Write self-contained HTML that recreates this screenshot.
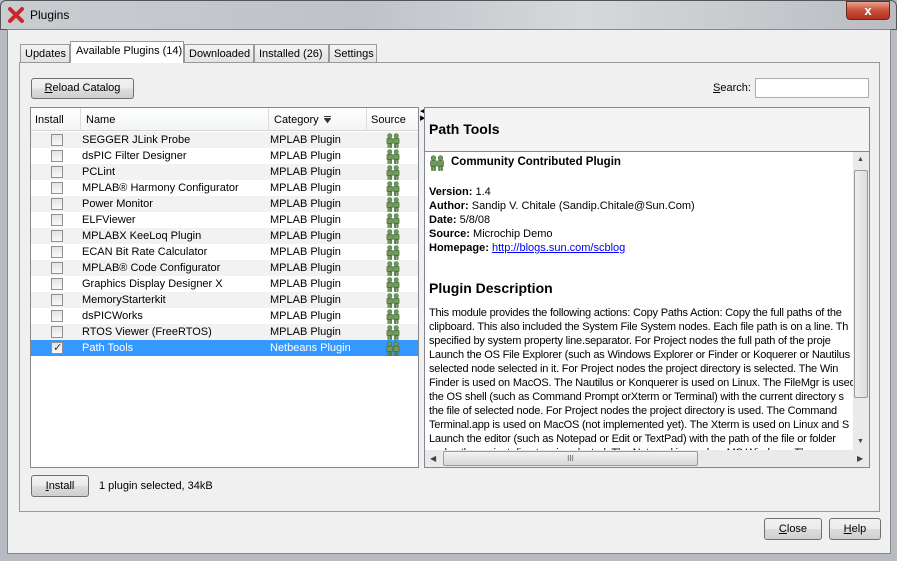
<!DOCTYPE html>
<html><head><meta charset="utf-8"><style>
*{box-sizing:border-box;margin:0;padding:0}
body{width:897px;height:561px;overflow:hidden;font-family:"Liberation Sans","DejaVu Sans",sans-serif;font-size:11px;color:#000;background:#b8bcc2;position:relative}
.a{position:absolute}
.btn{position:absolute;border:1px solid #707070;border-radius:3px;background:linear-gradient(#f2f2f2,#ebebeb 50%,#dddddd 51%,#cfcfcf);text-align:center;font-size:11px}
.row{position:absolute;left:0;width:387px;height:16px;line-height:16px}
.row span{position:absolute}
.cb{position:absolute;left:20px;top:2px;width:12px;height:12px;border:1px solid #8f8f8f;background:linear-gradient(#e4e4e4,#f8f8f8)}
.ic{position:absolute;left:354px;top:1px}
.txt p{white-space:nowrap}
u{text-decoration:underline}
</style></head><body>
<div class="a" style="left:0;top:0;width:897px;height:30px;background:linear-gradient(90deg,#c9ccd1,#bfc3c8 40%,#d6d8db 65%,#b9bdc2);border:1px solid #555;border-radius:6px 6px 0 0"></div>
<svg class="a" style="left:7px;top:6px" width="18" height="18" viewBox="0 0 18 18"><path d="M3 3L15 15M15 3L3 15" stroke="#c8282c" stroke-width="4" stroke-linecap="round"/></svg>
<div class="a" style="left:30px;top:8px;font-size:12px">Plugins</div>
<div class="a" style="left:846px;top:1px;width:44px;height:19px;border:1px solid #6b2a20;border-radius:0 0 4px 4px;background:linear-gradient(#e8a090,#c9503a 50%,#b2301c);color:#fff;font-weight:bold;text-align:center;line-height:17px;font-size:13px">x</div>
<div class="a" style="left:7px;top:29px;width:884px;height:525px;background:#f0f0f0;border:1px solid #888"></div>
<div class="a" style="left:20px;top:44px;width:50px;height:19px;border:1px solid #999;border-bottom:none;background:linear-gradient(#f4f4f4,#e2e2e2);line-height:18px;padding-left:4px">Updates</div>
<div class="a" style="left:70px;top:41px;width:114px;height:22px;border:1px solid #999;border-bottom:none;background:#fff;line-height:19px;padding-left:5px;z-index:2">Available Plugins (14)</div>
<div class="a" style="left:184px;top:44px;width:70px;height:19px;border:1px solid #999;border-bottom:none;background:linear-gradient(#f4f4f4,#e2e2e2);line-height:18px;padding-left:4px">Downloaded</div>
<div class="a" style="left:254px;top:44px;width:75px;height:19px;border:1px solid #999;border-bottom:none;background:linear-gradient(#f4f4f4,#e2e2e2);line-height:18px;padding-left:4px">Installed (26)</div>
<div class="a" style="left:329px;top:44px;width:48px;height:19px;border:1px solid #999;border-bottom:none;background:linear-gradient(#f4f4f4,#e2e2e2);line-height:18px;padding-left:4px">Settings</div>
<div class="a" style="left:19px;top:62px;width:861px;height:450px;border:1px solid #999;background:#f0f0f0"></div>
<div class="btn" style="left:31px;top:78px;width:103px;height:21px;line-height:19px"><u>R</u>eload Catalog</div>
<div class="a" style="left:713px;top:82px"><u>S</u>earch:</div>
<div class="a" style="left:755px;top:78px;width:114px;height:20px;border:1px solid #abadb3;background:#fff"></div>
<div class="a" style="left:30px;top:107px;width:389px;height:361px;border:1px solid #828790;background:#fff;overflow:hidden">
<div class="a" style="left:0;top:0;width:387px;height:23px;background:linear-gradient(#fff,#f3f4f6);border-bottom:1px solid #d5d5d5"></div>
<div class="a" style="left:49px;top:0;width:1px;height:23px;background:#dcdcdc"></div>
<div class="a" style="left:237px;top:0;width:1px;height:23px;background:#dcdcdc"></div>
<div class="a" style="left:335px;top:0;width:1px;height:23px;background:#dcdcdc"></div>
<div class="a" style="left:4px;top:6px">Install</div>
<div class="a" style="left:55px;top:6px">Name</div>
<div class="a" style="left:243px;top:6px">Category</div>
<svg class="a" style="left:293px;top:8px" width="7" height="7" viewBox="0 0 7 7"><path d="M0 0.5H7M0.5 2.5H6.5L3.5 6.5Z" stroke="#333" stroke-width="1" fill="#333"/></svg>
<div class="a" style="left:340px;top:6px">Source</div>
<div id="rows"></div>
</div>
<div class="a" style="left:420px;top:108px;font-size:7px;line-height:7px">◀<br>▶</div>
<div class="a" style="left:424px;top:107px;width:446px;height:361px;border:1px solid #828790;background:#f4f4f4;overflow:hidden">
<div class="a" style="left:4px;top:13px;font-size:14px;font-weight:bold">Path Tools</div>
<div class="a" style="left:0;top:43px;width:444px;height:1px;background:#828790"></div>
<div class="a" style="left:0;top:44px;width:428px;height:298px;background:#fff;overflow:hidden">
<svg class="a" style="left:4px;top:3px" width="16" height="16" viewBox="0 0 16 16"><g fill="#6f9a5a" stroke="#3f6a30" stroke-width=".6"><circle cx="4.5" cy="3" r="2.3"/><circle cx="11.5" cy="3" r="2.3"/><rect x="1.5" y="5.5" width="6" height="6" rx="1"/><rect x="8.5" y="5.5" width="6" height="6" rx="1"/><rect x="2.5" y="11" width="1.5" height="4.5"/><rect x="5" y="11" width="1.5" height="4.5"/><rect x="9.5" y="11" width="1.5" height="4.5"/><rect x="12" y="11" width="1.5" height="4.5"/></g></svg>
<div class="a" style="left:26px;top:4px;font-weight:bold;font-size:11.5px">Community Contributed Plugin</div>
<div class="a txt" style="left:4px;top:33px;line-height:14px">
<p><b>Version:</b> 1.4</p><p><b>Author:</b> Sandip V. Chitale (Sandip.Chitale@Sun.Com)</p><p><b>Date:</b> 5/8/08</p><p><b>Source:</b> Microchip Demo</p><p><b>Homepage:</b> <span style="color:#00f;text-decoration:underline">http://blogs.sun.com/scblog</span></p></div>
<div class="a" style="left:4px;top:128px;font-size:14px;font-weight:bold">Plugin Description</div>
<div class="a txt" style="left:4px;top:154px;line-height:14px;letter-spacing:-0.2px">
<p>This module provides the following actions: Copy Paths Action: Copy the full paths of the</p>
<p>clipboard. This also included the System File System nodes. Each file path is on a line. Th</p>
<p>specified by system property line.separator. For Project nodes the full path of the proje</p>
<p>Launch the OS File Explorer (such as Windows Explorer or Finder or Koquerer or Nautilus</p>
<p>selected node selected in it. For Project nodes the project directory is selected. The Win</p>
<p>Finder is used on MacOS. The Nautilus or Konquerer is used on Linux. The FileMgr is used</p>
<p>the OS shell (such as Command Prompt orXterm or Terminal) with the current directory s</p>
<p>the file of selected node. For Project nodes the project directory is used. The Command</p>
<p>Terminal.app is used on MacOS (not implemented yet). The Xterm is used on Linux and S</p>
<p>Launch the editor (such as Notepad or Edit or TextPad) with the path of the file or folder</p>
<p>nodes the project directory is selected. The Notepad is used on MS Windows. The comm</p></div>
</div>
<div class="a" style="left:428px;top:44px;width:16px;height:298px;background:#eaeaea"></div>
<div class="a" style="left:432px;top:48px;font-size:7px;color:#444">▲</div>
<div class="a" style="left:429px;top:62px;width:14px;height:228px;border:1px solid #9a9a9a;border-radius:2px;background:linear-gradient(90deg,#eee,#dcdcdc)"></div>
<div class="a" style="left:432px;top:330px;font-size:7px;color:#444">▼</div>
<div class="a" style="left:0;top:342px;width:444px;height:17px;background:#eaeaea"></div>
<div class="a" style="left:5px;top:346px;font-size:8px;color:#444">◀</div>
<div class="a" style="left:18px;top:343px;width:255px;height:15px;border:1px solid #9a9a9a;border-radius:2px;background:linear-gradient(#f2f2f2,#d8d8d8);text-align:center;font-size:8px;line-height:13px;color:#555">III</div>
<div class="a" style="left:432px;top:346px;font-size:8px;color:#444">▶</div>
</div>
<div class="btn" style="left:31px;top:475px;width:58px;height:22px;line-height:20px"><u>I</u>nstall</div>
<div class="a" style="left:99px;top:480px">1 plugin selected, 34kB</div>
<div class="btn" style="left:764px;top:518px;width:58px;height:22px;line-height:20px"><u>C</u>lose</div>
<div class="btn" style="left:829px;top:518px;width:52px;height:22px;line-height:20px"><u>H</u>elp</div>
<script>
var names=["SEGGER JLink Probe","dsPIC Filter Designer","PCLint","MPLAB® Harmony Configurator","Power Monitor","ELFViewer","MPLABX KeeLoq Plugin","ECAN Bit Rate Calculator","MPLAB® Code Configurator","Graphics Display Designer X","MemoryStarterkit","dsPICWorks","RTOS Viewer (FreeRTOS)","Path Tools"];
var ic='<svg class="ic" width="16" height="15" viewBox="0 0 16 16"><g fill="#6f9a5a" stroke="#3f6a30" stroke-width=".6"><circle cx="4.5" cy="3" r="2.3"/><circle cx="11.5" cy="3" r="2.3"/><rect x="1.5" y="5.5" width="6" height="6" rx="1"/><rect x="8.5" y="5.5" width="6" height="6" rx="1"/><rect x="2.5" y="11" width="1.5" height="4.5"/><rect x="5" y="11" width="1.5" height="4.5"/><rect x="9.5" y="11" width="1.5" height="4.5"/><rect x="12" y="11" width="1.5" height="4.5"/></g></svg>';
var h="";
names.forEach(function(n,i){var sel=i==13;var bg=sel?"#3399ff":(i%2==0?"#f2f2f2":"#fff");var c=sel?"#fff":"#000";
h+='<div class="row" style="top:'+(24+i*16)+'px;background:'+bg+';color:'+c+'"><div class="cb">'+(sel?'<span style="left:1px;top:-3px;color:#333;font-size:11px">✓</span>':'')+'</div><span style="left:51px">'+n+'</span><span style="left:239px">'+(sel?"Netbeans Plugin":"MPLAB Plugin")+'</span>'+ic+'</div>';});
document.getElementById("rows").innerHTML=h;
</script>
</body></html>
